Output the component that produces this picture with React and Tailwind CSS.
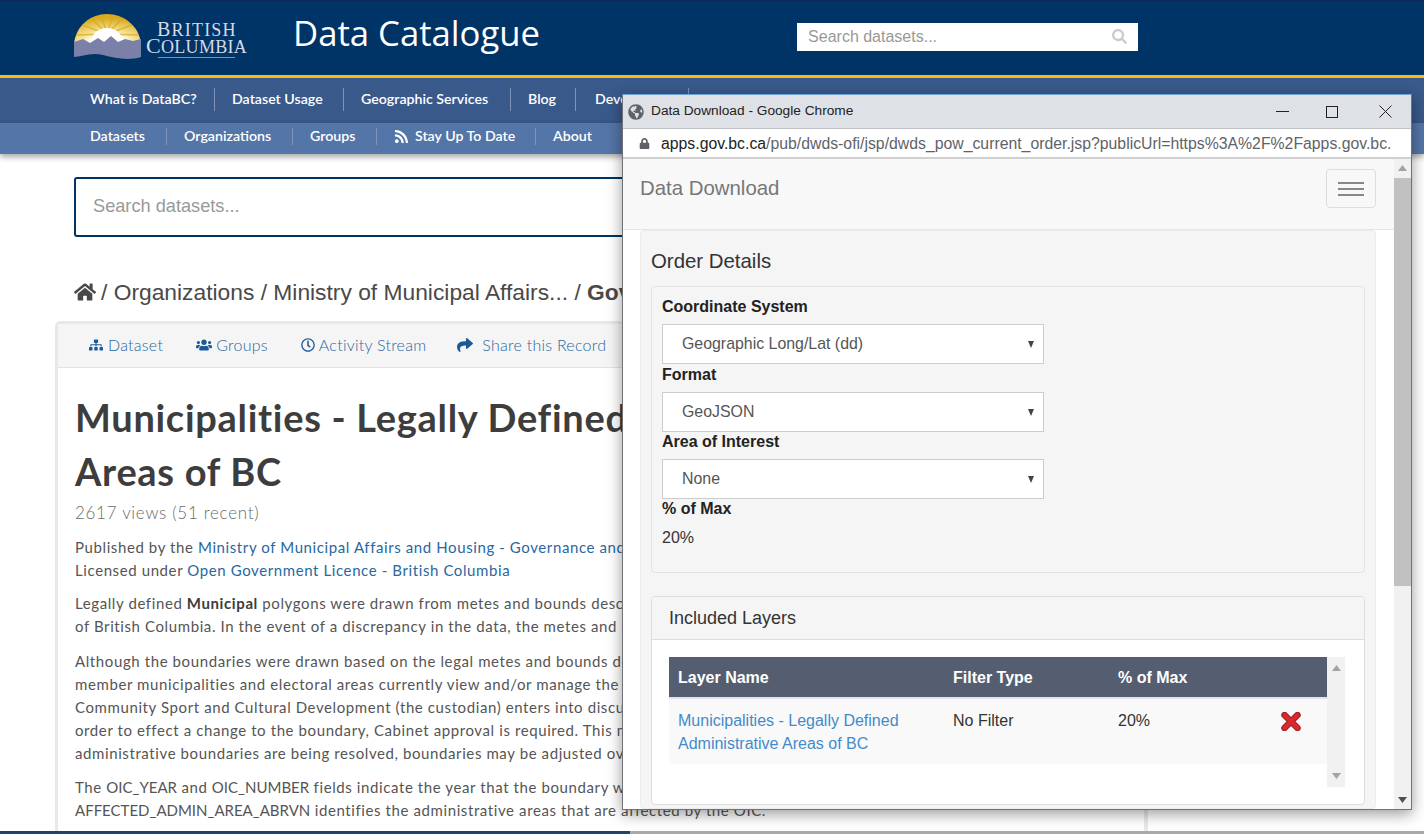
import React from "react";
import { FaHome, FaSitemap, FaUsers, FaRegClock, FaShare, FaRss, FaSearch, FaGlobeAmericas, FaLock } from "react-icons/fa";

const Logo = () => (
  <div className="flex items-start w-[175px] h-[50px]">
    <svg width="70" height="47" viewBox="0 0 70 47" className="shrink-0">
      <defs>
        <radialGradient id="sun" cx="0.5" cy="0.95" r="0.8">
          <stop offset="0.3" stopColor="#fff" />
          <stop offset="0.5" stopColor="#f6e39a" />
          <stop offset="1" stopColor="#d9ac1f" />
        </radialGradient>
      </defs>
      <path d="M1 30 C3 11 18 0 34 0 C50 0 66 11 68 30 Z" fill="url(#sun)" />
      <g stroke="#d9ac1f" strokeWidth="1.6" opacity="0.75">
        <path d="M34 20 L28 1 M34 20 L40 1 M34 20 L18 4 M34 20 L50 4 M34 20 L9 11 M34 20 L59 11 M34 20 L3 21 M34 20 L65 21" />
      </g>
      <ellipse cx="34" cy="26" rx="15" ry="12" fill="#fff" />
      <path d="M1 28 L10 25 L17 29 L25 24 L31 28 L38 22 L45 28 L52 25 L60 27 L68 25 L68 43 C55 47 42 44 30 41 C18 38 8 43 1 43 Z" fill="#7a80a8" />
    </svg>
    <div className="flex flex-col ml-[3px] mt-[7px] font-['Liberation_Serif',serif] text-[#d5dbe6]">
      <span className="ml-[11px] h-[16px] leading-[16px] text-[20px] whitespace-nowrap tracking-[1.2px]">B<span className="text-[18px]">RITISH</span></span>
      <span className="h-[17px] leading-[17px] text-[22px] whitespace-nowrap tracking-[0.3px]">C<span className="text-[18px]">OLUMBIA</span></span>
      <span className="ml-[12px] mt-[3px] h-px w-[77px] bg-[#7f93ad]" />
    </div>
  </div>
);

const NavRow = ({ links, cls }) => (
  <div className={cls}>
    {links.map((l, i) => (
      <div key={i} className={`flex items-center gap-[6px] whitespace-nowrap h-full ${l.w} ${i ? "border-l border-[#7f95b8] pl-[17px]" : ""}`}>
        {l.icon}
        {l.t}
      </div>
    ))}
  </div>
);

const Tab = ({ icon, t, gap = "gap-[4px]", cls = "" }) => (
  <div className={`flex items-center ${gap} whitespace-nowrap ${cls}`}>
    {icon}
    <span>{t}</span>
  </div>
);

const Link = ({ children }) => <span className="text-[#2a679f]">{children}</span>;

const Field = ({ label, value, mb = "" }) => (
  <>
    <div className="font-bold text-[16px] leading-[20px] text-[#222]">{label}</div>
    <div className={`mt-[7px] w-[382px] h-[40px] bg-white border border-[#ccc] flex items-center justify-between pl-[19px] pr-[9px] text-[15.9px] text-[#555] ${mb}`}>
      <span>{value}</span>
      <svg width="6" height="7" viewBox="0 0 6 7"><path d="M0 0 H6 L3 7 Z" fill="#444" /></svg>
    </div>
  </>
);

const ScrollBtn = ({ up, c = "#505050" }) => (
  <svg width="9" height="6" viewBox="0 0 9 6"><path d={up ? "M0 6 H9 L4.5 0 Z" : "M0 0 H9 L4.5 6 Z"} fill={c} /></svg>
);

export default function App() {
  return (
    <div className="relative w-[1424px] h-[834px] overflow-hidden bg-white flex flex-col font-['Lato',sans-serif]">
      <header className="h-[75px] shrink-0 bg-[#036] border-t border-[#0b2858] pl-[73px] flex items-center">
        <div className="-mt-[9px] pt-[10px] h-[60px]"><Logo /></div>
        <h1 className="ml-[45px] -mt-[9px] font-['Open_Sans',sans-serif] text-[34.7px] text-white whitespace-nowrap">Data Catalogue</h1>
        <div className="ml-[257px] -mt-[3px] w-[341px] h-[28px] bg-white flex items-center justify-between pl-[11px] pr-[11px] font-['Liberation_Sans',sans-serif] text-[16px] text-[#999]">
          <span>Search datasets...</span>
          <FaSearch className="text-[#ccc] text-[15px]" />
        </div>
      </header>
      <div className="h-[3px] shrink-0 bg-[#fcba19]" />
      <nav className="h-[45px] shrink-0 bg-gradient-to-b from-[#3a5a8c] to-[#38598a] pl-[90px] flex items-center pb-[3px]">
        <NavRow cls="flex items-center h-[23px] text-[14.2px] font-semibold text-white" links={[{ t: "What is DataBC?", w: "w-[124px]" }, { t: "Dataset Usage", w: "w-[129px]" }, { t: "Geographic Services", w: "w-[167px]" }, { t: "Blog", w: "w-[65px]" }, { t: "Developers", w: "w-[113px] pl-[19px]" }, { t: "", w: "w-[20px]" }]} />
      </nav>
      <nav className="h-[31px] shrink-0 bg-[#5475a7] pl-[90px] flex items-center shadow-[0_3px_6px_rgba(0,0,0,0.35)] relative pb-[5px]">
        <NavRow cls="flex items-center h-[17px] text-[14.2px] font-semibold text-white" links={[{ t: "Datasets", w: "w-[76px]" }, { t: "Organizations", w: "w-[126px]" }, { t: "Groups", w: "w-[84px]" }, { t: "Stay Up To Date", w: "w-[159px]", icon: <FaRss className="text-[15px]" /> }, { t: "About", w: "w-[70px]" }]} />
      </nav>

      <main className="flex-1 min-h-0 pt-[23px] flex flex-col">
        <div className="ml-[74px] w-[1000px] h-[60px] shrink-0 border-2 border-[#036] rounded-[3px] flex items-center pl-[17px] pb-[1px] font-['Liberation_Sans',sans-serif] text-[18.2px] text-[#999]">Search datasets...</div>
        <div className="ml-[74px] mt-[40px] h-[30px] shrink-0 flex items-center gap-[5px] font-['Liberation_Sans',sans-serif] text-[22.8px] text-[#494949] whitespace-nowrap">
          <FaHome className="text-[#494949] text-[22px]" />
          <span>/ Organizations / Ministry of Municipal Affairs... / <b>Governance</b></span>
        </div>
        <div className="ml-[55px] mt-[14px] w-[1093px] flex-1 min-h-0 border-[3px] border-r-[4px] border-b-0 border-[#e8e8e8] rounded-t-[5px] overflow-hidden">
          <div className="h-[44px] bg-[#f5f5f5] border-b border-[#e3e3e3] flex items-center pl-[31px] pb-[2px] gap-[33px] text-[16px] text-[#2a679f] tracking-[0.25px] font-light">
            <Tab gap="gap-[5px]" icon={<FaSitemap className="text-[14px] text-[#1a5a96]" />} t="Dataset" />
            <Tab icon={<FaUsers className="text-[16px] text-[#1a5a96]" />} t="Groups" />
            <Tab gap="gap-[4px]" icon={<FaRegClock className="text-[14px] text-[#1a5a96]" />} t="Activity Stream" />
            <Tab gap="gap-[9px]" cls="-ml-[2px]" icon={<FaShare className="text-[16px] text-[#1a5a96]" />} t="Share this Record" />
          </div>
          <div className="pl-[17px] pt-[22px] text-[#555]">
            <h2 className="text-[38px] leading-[54px] font-bold text-[#3d3d3d] tracking-[0.7px] whitespace-nowrap">Municipalities - Legally Defined Administrative<br />Areas of BC</h2>
            <div className="mt-[2px] text-[17px] leading-[26px] text-[#6b6b6b] tracking-[0.7px] font-light">2617 views (51 recent)</div>
            <div className="mt-[10px] text-[15px] leading-[23px] whitespace-nowrap tracking-[0.6px]">
              <p>Published by the <Link>Ministry of Municipal Affairs and Housing - Governance and Structure</Link></p>
              <p>Licensed under <Link>Open Government Licence - British Columbia</Link></p>
              <p className="mt-[10px]">Legally defined <b className="text-[#3d3d3d]">Municipal</b> polygons were drawn from metes and bounds descriptions</p>
              <p>of British Columbia. In the event of a discrepancy in the data, the metes and bounds</p>
              <p className="mt-[12px]">Although the boundaries were drawn based on the legal metes and bounds descriptions</p>
              <p>member municipalities and electoral areas currently view and/or manage the area</p>
              <p>Community Sport and Cultural Development (the custodian) enters into discussions</p>
              <p>order to effect a change to the boundary, Cabinet approval is required. This means</p>
              <p>administrative boundaries are being resolved, boundaries may be adjusted over time</p>
              <p className="mt-[11px]">The <span className="tracking-normal">OIC_YEAR</span> and <span className="tracking-normal">OIC_NUMBER</span> fields indicate the year that the boundary was last</p>
              <p><span className="tracking-normal">AFFECTED_ADMIN_AREA_ABRVN</span> identifies the administrative areas that are affected by the OIC.</p>
            </div>
          </div>
        </div>
      </main>
      <div className="h-[3px] shrink-0 flex">
        <div className="w-[630px] bg-[#25426f]" />
        <div className="flex-1 bg-[#a9a9a9]" />
      </div>

      <section className="absolute left-[622px] top-[94px] w-[790px] h-[716px] bg-white border border-[#6f7378] border-t-[#6ca3d9] shadow-[0_4px_14px_rgba(0,0,0,0.4)] flex flex-col font-['Liberation_Sans',sans-serif]">
        <div className="h-[33px] shrink-0 bg-[#dee1e6] flex items-center pl-[5px] text-[13.7px] text-[#222]">
          <FaGlobeAmericas className="text-[#5f6368] text-[16px]" />
          <span className="ml-[7px]">Data Download - Google Chrome</span>
          <div className="ml-auto flex items-center pr-[19px] text-[#222]">
            <span className="w-[13px] h-px bg-[#222]" />
            <span className="ml-[37px] w-[12px] h-[12px] border border-[#222]" />
            <svg className="ml-[41px]" width="13" height="13" viewBox="0 0 13 13"><path d="M0.5 0.5 L12.5 12.5 M12.5 0.5 L0.5 12.5" stroke="#222" strokeWidth="1" /></svg>
          </div>
        </div>
        <div className="h-[31px] shrink-0 border-t border-[#bfc1c4] border-b-2 border-b-[#d0d0d0] flex items-center pl-[16px] pr-[8px] pt-[1px] text-[15.8px] whitespace-nowrap overflow-hidden">
          <FaLock className="text-[#5f6368] text-[11px] shrink-0" />
          <span className="ml-[11px] text-[#222]">apps.gov.bc.ca</span>
          <span className="text-[#5f6368]">/pub/dwds-ofi/jsp/dwds_pow_current_order.jsp?publicUrl=https%3A%2F%2Fapps.gov.bc.</span>
        </div>
        <div className="flex-1 min-h-0 flex">
          <div className="flex-1 min-w-0 overflow-hidden flex flex-col">
            <div className="h-[71px] shrink-0 bg-[#f8f8f8] border-b border-[#e7e7e7] flex items-start justify-between pl-[17px] pr-[18px] pt-[10px]">
              <span className="mt-[7px] text-[20.4px] leading-[24px] text-[#777]">Data Download</span>
              <div className="w-[50px] h-[39px] border border-[#ddd] rounded-[4px] flex flex-col items-center justify-center gap-[4px]">
                <span className="w-[26px] h-[2px] bg-[#888]" />
                <span className="w-[26px] h-[2px] bg-[#888]" />
                <span className="w-[26px] h-[2px] bg-[#888]" />
              </div>
            </div>
            <div className="mx-[17px] mr-[18px] flex-1 min-h-0 bg-[#f5f5f5] border border-[#ececec] rounded-[4px] px-[10px] overflow-hidden">
              <div className="mt-[18px] h-[24px] flex items-center text-[20.4px] text-[#333]">Order Details</div>
              <div className="mt-[13px] h-[287px] border border-[#e3e3e3] rounded-[4px] pl-[10px] pt-[10px]">
                <Field label="Coordinate System" value="Geographic Long/Lat (dd)" mb="mb-[1px]" />
                <Field label="Format" value="GeoJSON" />
                <Field label="Area of Interest" value="None" />
                <div className="font-bold text-[16px] leading-[20px] text-[#222]">% of Max</div>
                <div className="mt-[9px] text-[16px] leading-[20px] text-[#333]">20%</div>
              </div>
              <div className="mt-[23px] h-[209px] bg-white border border-[#ddd] rounded-[4px] overflow-hidden">
                <div className="h-[43px] bg-[#f5f5f5] border-b border-[#ddd] flex items-center pl-[17px] text-[18px] text-[#333]">Included Layers</div>
                <div className="mt-[17px] ml-[17px] flex w-[676px] h-[130px]">
                  <div className="w-[658px] text-[16px]">
                    <div className="h-[42px] bg-[#545e70] border-b-2 border-[#e4e4e4] grid grid-cols-[275px_165px_1fr] items-center pl-[9px] pt-[1px] font-bold text-white">
                      <span>Layer Name</span><span>Filter Type</span><span>% of Max</span>
                    </div>
                    <div className="h-[65px] bg-[#f9f9f9] grid grid-cols-[275px_165px_163px_1fr] pl-[9px] pt-[10px] leading-[23px] text-[#333]">
                      <span className="text-[#428bca]">Municipalities - Legally Defined<br />Administrative Areas of BC</span>
                      <span>No Filter</span>
                      <span>20%</span>
                      <svg width="20" height="19" viewBox="0 0 20 19" className="mt-[3px]">
                        <path d="M3.5 3 L16.5 16 M16.5 3 L3.5 16" stroke="#a81f23" strokeWidth="6.5" strokeLinecap="round" />
                        <path d="M3.5 3 L16.5 16 M16.5 3 L3.5 16" stroke="#d8292f" strokeWidth="4" strokeLinecap="round" />
                      </svg>
                    </div>
                  </div>
                  <div className="w-[18px] bg-[#f1f1f1] flex flex-col items-center justify-between py-[8px]">
                    <ScrollBtn up c="#a3a3a3" />
                    <ScrollBtn c="#a3a3a3" />
                  </div>
                </div>
              </div>
            </div>
          </div>
          <div className="w-[17px] shrink-0 bg-[#f1f1f1] flex flex-col items-center justify-between py-[6px] relative">
            <ScrollBtn up c="#a3a3a3" />
            <div className="absolute left-0 right-0 top-[19px] h-[408px] bg-[#c1c1c1]" />
            <ScrollBtn />
          </div>
        </div>
      </section>
    </div>
  );
}
